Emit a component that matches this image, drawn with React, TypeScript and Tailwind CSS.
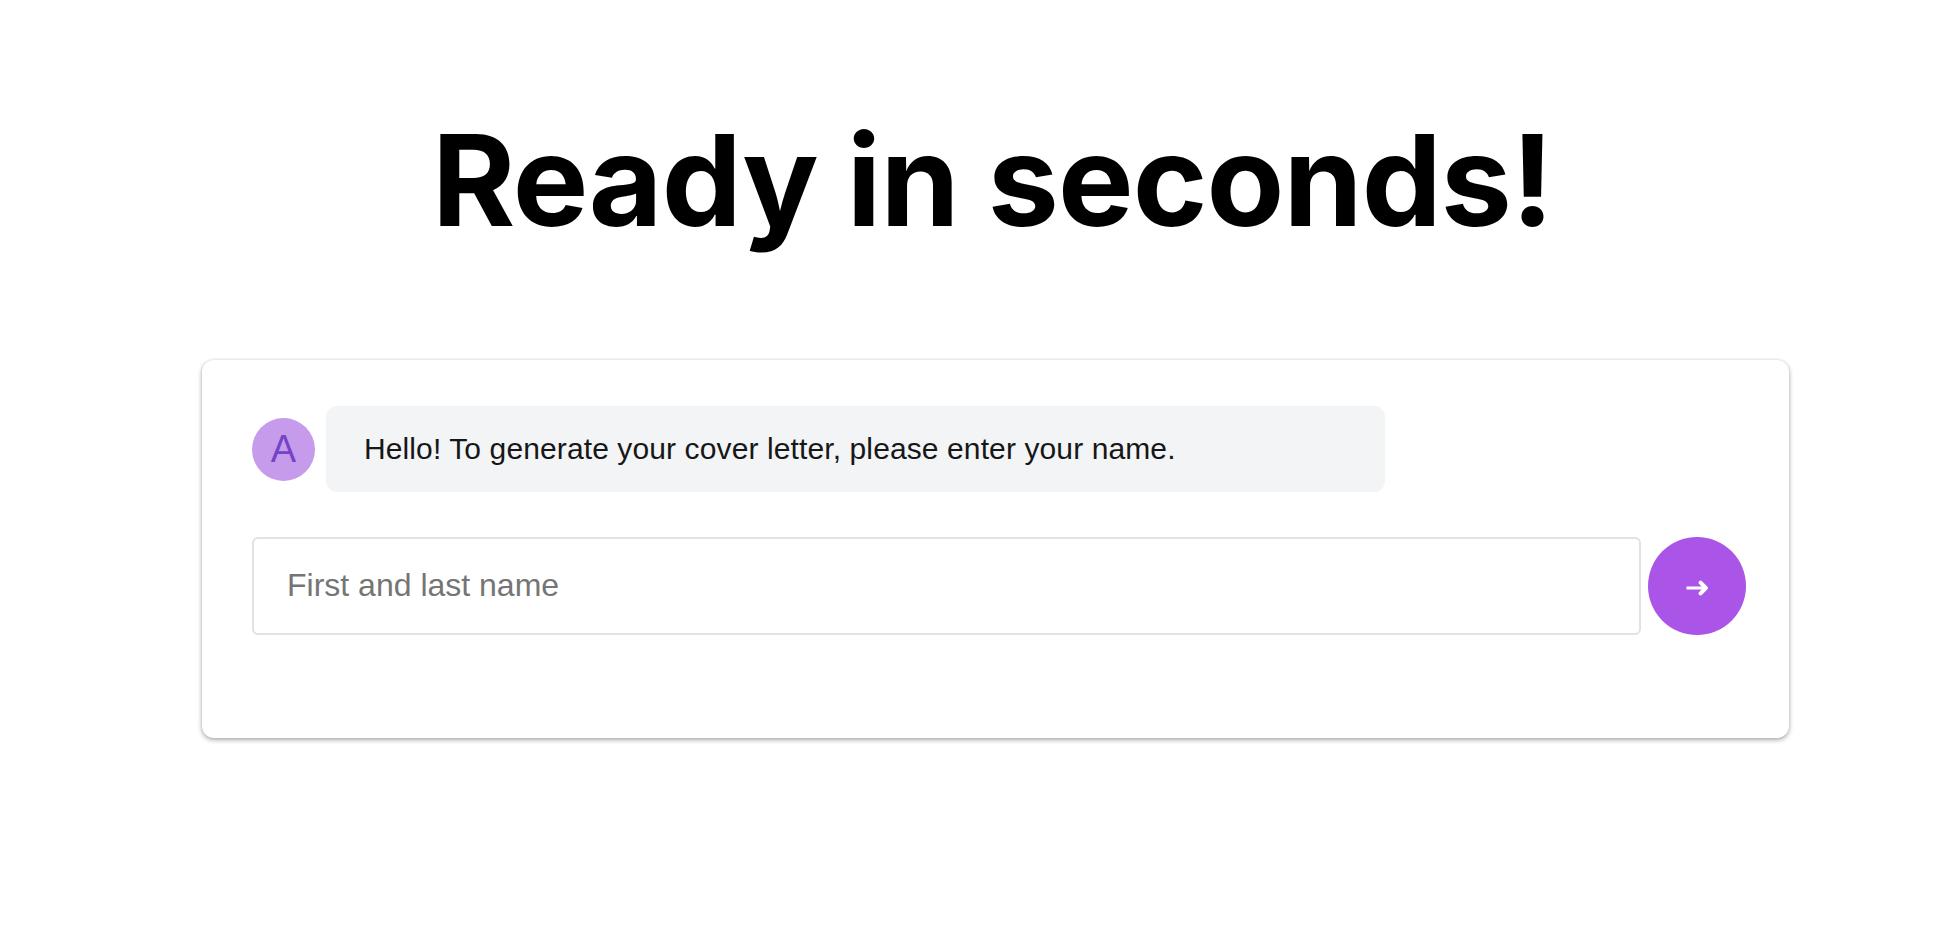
import { useState } from 'react'

function ArrowIcon() {
  return (
    <svg width="22" height="16" viewBox="0 0 22 16" fill="none" stroke="white" strokeLinecap="round">
      <path d="M2 8H19" strokeLinecap="square" strokeWidth="3" />
      <path d="M14.6 2.6L19.8 8L14.6 13.4" strokeWidth="4" strokeLinejoin="round" />
    </svg>
  )
}

export default function App() {
  const [name, setName] = useState('')

  return (
    <div className="h-[934px] overflow-hidden bg-white font-['Liberation_Sans',Arial,sans-serif]">
      <div className="mx-auto h-px w-[840px] shadow-[0_2px_14px_rgba(0,0,0,0.03)]" />

      <h1 className="mt-[103px] pl-[31px] text-center font-['Inter',sans-serif] text-[127px] leading-[152px] font-bold tracking-[-0.9px] text-black">
        Ready in seconds!
      </h1>

      <div className="mt-[104px] ml-[202px] h-[378px] w-[1587px] rounded-xl bg-white px-[50px] pt-[46px] shadow-[0_2px_5px_rgba(0,0,0,0.32),0_0_3px_rgba(0,0,0,0.1)]">
        <div className="flex items-center gap-[11px]">
          <div className="flex size-[63px] items-center justify-center rounded-full bg-[#c79bec] text-[38px] leading-none text-[#7344c5]">
            A
          </div>
          <div className="h-[86px] w-[1059px] rounded-[11px] bg-[#f3f4f6] pl-[38px] text-[30px] leading-[86px] tracking-[0.11px] text-[#171717]">
            Hello! To generate your cover letter, please enter your name.
          </div>
        </div>

        <form className="mt-[45px] flex gap-[7px]" onSubmit={e => e.preventDefault()}>
          <input
            className="h-[98px] w-[1389px] shrink-0 rounded-md border-2 border-[#e2e2e2] bg-white px-[33px] pb-[2px] text-[32px] text-black outline-none placeholder:text-[#757575]"
            placeholder="First and last name"
            value={name}
            onChange={e => setName(e.target.value)}
          />
          <button className="flex size-[98px] shrink-0 items-center justify-center rounded-full bg-[#ab54e8] pt-[3px]">
            <ArrowIcon />
          </button>
        </form>
      </div>
    </div>
  )
}
